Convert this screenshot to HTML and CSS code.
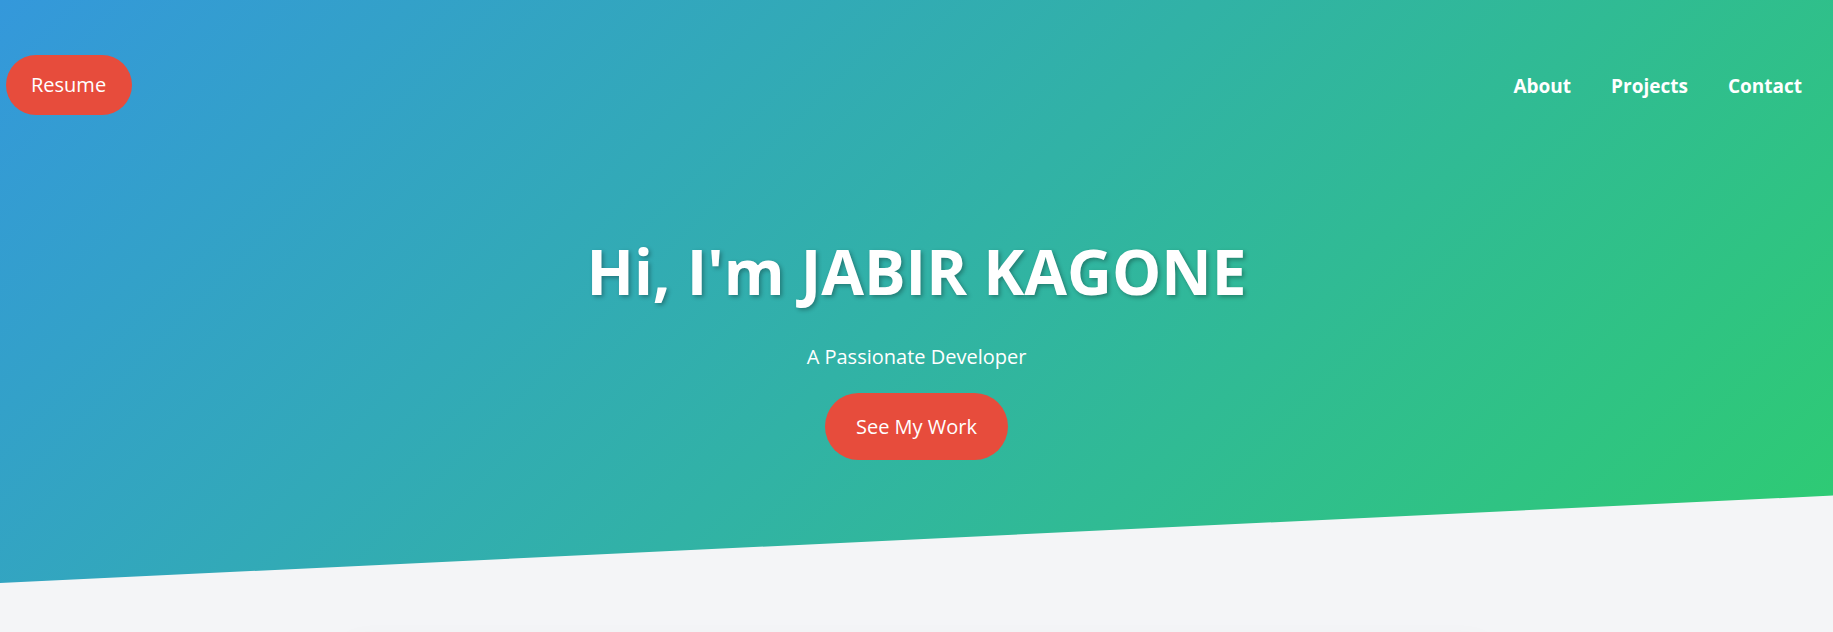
FILE: index.html
```html
<!DOCTYPE html>
<html lang="en">
<head>
<meta charset="utf-8">
<title>Jabir Kagone</title>
<link rel="stylesheet" href="styles.css">
</head>
<body>
  <section class="hero">
    <header class="topbar">
      <a class="btn btn-resume" href="#">Resume</a>
      <nav class="nav">
        <a href="#about">About</a>
        <a href="#projects">Projects</a>
        <a href="#contact">Contact</a>
      </nav>
    </header>
    <div class="hero-content">
      <h1 class="hero-title">Hi, I'm JABIR KAGONE</h1>
      <p class="hero-sub">A Passionate Developer</p>
      <a class="btn btn-work" href="#projects">See My Work</a>
    </div>
  </section>
  <section class="about" id="about">
    <div class="card"></div>
  </section>
</body>
</html>
```
FILE: styles.css
```css
* { box-sizing: border-box; }
html, body { margin: 0; padding: 0; }
body {
  font-family: "Open Sans", "Noto Sans", sans-serif;
  background: #f4f5f7;
  color: #333;
  overflow: hidden;
}
a { text-decoration: none; color: inherit; }

.hero {
  height: 583px;
  background: linear-gradient(135deg, #3498db, #2ecc71);
  clip-path: polygon(0 0, 100% 0, 100% 85%, 0 100%);
  color: #fff;
  display: flex;
  flex-direction: column;
}

.topbar {
  display: flex;
  justify-content: space-between;
  align-items: center;
  padding: 55px 31px 0 6px;
}

.btn {
  display: inline-block;
  background: #e74c3c;
  color: #fff;
  border-radius: 40px;
}

.btn-resume {
  font-size: 20px;
  line-height: 26px;
  padding: 17px 26px 17px 25px;
}

.nav {
  display: flex;
  gap: 40px;
  padding-top: 3px;
}
.nav a {
  font-size: 19px;
  font-weight: 700;
  line-height: 25px;
}

.hero-content {
  display: flex;
  flex-direction: column;
  align-items: center;
  text-align: center;
  padding-top: 119px;
}

.hero-title {
  margin: 0 0 34px;
  font-size: 62px;
  line-height: 74px;
  font-weight: 700;
  text-shadow: 2px 2px 4px rgba(0, 0, 0, 0.3);
}

.hero-sub {
  margin: 0 0 21px;
  font-size: 20px;
  line-height: 30px;
}

.btn-work {
  font-size: 20px;
  line-height: 27px;
  padding: 20px 31px;
}

.about {
  padding: 60px 0 0;
  display: flex;
  justify-content: center;
}
.card {
  width: 1140px;
  height: 300px;
  background: #f4f5f7;
  border-radius: 12px;
  box-shadow: 0 5px 30px rgba(0, 0, 0, 0.07);
}
```
